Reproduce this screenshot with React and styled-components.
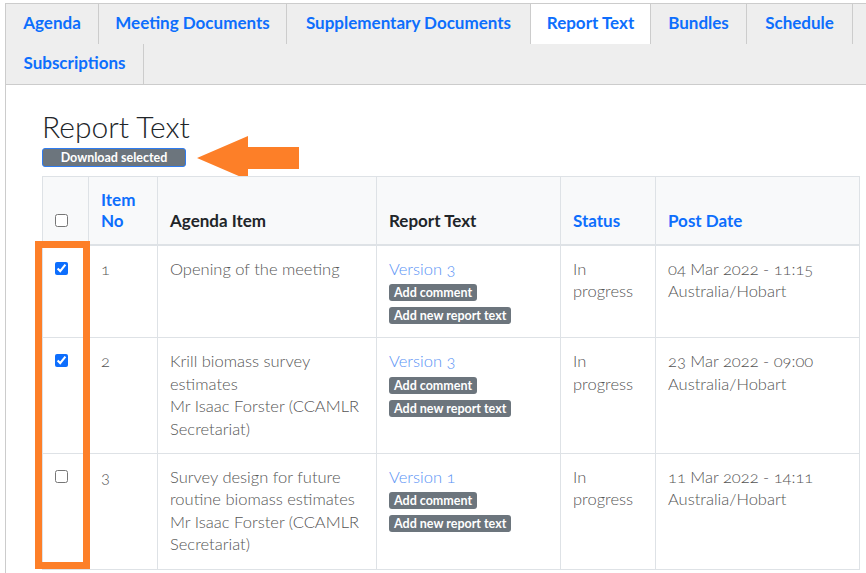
import * as React from 'react';
import styled, { createGlobalStyle } from 'styled-components';


/* data */
const TABS = [
    { label: 'Agenda', width: 93 },
    { label: 'Meeting Documents', width: 188 },
    { label: 'Supplementary Documents', width: 244 },
    { label: 'Report Text', width: 120, active: true },
    { label: 'Bundles', width: 96 },
    { label: 'Schedule', width: 106 },
    { label: 'Subscriptions', width: 138 },
];

const ROWS = [
    { no: '1', checked: true, item: ['Opening of the meeting'], version: 'Version 3', date: '04 Mar 2022 - 11:15' },
    { no: '2', checked: true, item: ['Krill biomass survey estimates', 'Mr Isaac Forster (CCAMLR Secretariat)'], version: 'Version 3', date: '23 Mar 2022 - 09:00' },
    { no: '3', checked: false, item: ['Survey design for future routine biomass estimates', 'Mr Isaac Forster (CCAMLR Secretariat)'], version: 'Version 1', date: '11 Mar 2022 - 14:11' },
];

const COLS = [46, 69, 219, 184, 95, 204];


/* styles */
const GlobalStyle = createGlobalStyle`
  body {
    margin: 0;
    background: #fff;
    font-family: Lato, "Open Sans", sans-serif;
  }
`;

const Page = styled('div')`
  padding: 3px 0 0 5px;
`;

const Panel = styled('div')`
  border-top: 1px solid #ccc;
  border-left: 1px solid #ccc;
  min-height: 569px;
`;

const TabBar = styled('nav')`
  display: flex;
  flex-wrap: wrap;
  background: #eee;
  border-bottom: 1px solid #ccc;
`;

const Tab = styled(({ active, w, ...props }) => <a {...props} />)`
  box-sizing: border-box;
  width: ${({ w }) => w}px;
  height: 40px;
  padding-bottom: 4px;
  display: flex;
  align-items: center;
  justify-content: center;
  border-right: 1px solid #ccc;
  background: ${({ active }) => (active ? '#fff' : 'transparent')};
  color: #0d6efd;
  font-size: 17px;
  font-weight: 700;
  text-decoration: none;
  cursor: pointer;
`;

const Content = styled('div')`
  padding: 0 7px 0 36px;
`;

const Title = styled('h1')`
  margin: 23px 0 4px;
  font-size: 30px;
  font-weight: 300;
  line-height: 1.2;
  color: #212529;
`;

const ButtonRow = styled('div')`
  position: relative;
  margin-bottom: 9px;
`;

const DownloadButton = styled('button')`
  display: block;
  box-sizing: border-box;
  width: 144px;
  height: 19px;
  padding: 0;
  border: 1px solid #2f7cf0;
  border-radius: 3px;
  background: #6c757d;
  color: #fff;
  font-family: Lato, sans-serif;
  font-size: 12.5px;
  font-weight: 700;
  line-height: 17px;
`;

const Arrow = styled('svg')`
  position: absolute;
  left: 154px;
  top: -13px;
`;

const TableWrap = styled('div')`
  position: relative;
`;

const Table = styled('table')`
  width: 817px;
  table-layout: fixed;
  border-collapse: collapse;
`;

const HeadRow = styled('tr')`
  background: #f8f9fa;
  border-bottom: 2px solid #dee2e6;
`;

const Th = styled(({ sortable, ...props }) => <th {...props} />)`
  padding: 12px 12px 13px;
  border: 1px solid #dee2e6;
  border-bottom: 2px solid #dee2e6;
  vertical-align: bottom;
  text-align: left;
  font-size: 17px;
  font-weight: 700;
  line-height: 21px;
  color: ${({ sortable }) => (sortable ? '#0d6efd' : '#212529')};
`;

const Td = styled('td')`
  padding: 12px 12px 13px;
  border: 1px solid #dee2e6;
  vertical-align: top;
  font-size: 16.5px;
  font-weight: 300;
  line-height: 22.4px;
  color: #555;
  font-variant-numeric: oldstyle-nums;
`;

const Check = styled(({ head, ...props }) => <input {...props} />)`
  width: 13px;
  height: 13px;
  margin: ${({ head }) => (head ? '0 0 4px' : '4px 0 0')};
  accent-color: #0d6efd;
`;

const VersionLink = styled('a')`
  display: block;
  color: #5a93f5;
  font-weight: 300;
  text-decoration: none;
`;

const Badges = styled('div')`
  display: flex;
  flex-direction: column;
  align-items: flex-start;
  gap: 6px;
  margin-top: 4px;
`;

const Badge = styled('span')`
  padding: 0 5px;
  border-radius: 3px;
  background: #6c757d;
  color: #fff;
  font-size: 12.5px;
  font-weight: 700;
  line-height: 17px;
  font-variant-numeric: normal;
`;

const Highlight = styled('div')`
  position: absolute;
  left: -7px;
  top: 65px;
  width: 55px;
  height: 328px;
  box-sizing: border-box;
  border: 7px solid #fd7f28;
  pointer-events: none;
`;


const App = () => {
    return (
        <Page>
            <GlobalStyle/>
            <Panel>
                <TabBar>
                    {TABS.map((t) => (
                        <Tab key={t.label} w={t.width} active={t.active}>{t.label}</Tab>
                    ))}
                </TabBar>

                <Content>
                    <Title>Report Text</Title>

                    <ButtonRow>
                        <DownloadButton>Download selected</DownloadButton>
                        <Arrow width="104" height="46" viewBox="0 0 104 46">
                            <path d="M1 23 L52 1 L52 12 L103 12 L103 34 L52 34 L52 45 Z" fill="#fd7f28"/>
                        </Arrow>
                    </ButtonRow>

                    <TableWrap>
                        <Table>
                            <colgroup>
                                {COLS.map((w, i) => <col key={i} style={{ width: w }}/>)}
                            </colgroup>
                            <thead>
                                <HeadRow>
                                    <Th><Check type="checkbox" head/></Th>
                                    <Th sortable>Item No</Th>
                                    <Th>Agenda Item</Th>
                                    <Th>Report Text</Th>
                                    <Th sortable>Status</Th>
                                    <Th sortable>Post Date</Th>
                                </HeadRow>
                            </thead>
                            <tbody>
                                {ROWS.map((r) => (
                                    <tr key={r.no}>
                                        <Td><Check type="checkbox" defaultChecked={r.checked}/></Td>
                                        <Td>{r.no}</Td>
                                        <Td>{r.item.map((line) => <div key={line}>{line}</div>)}</Td>
                                        <Td>
                                            <VersionLink>{r.version}</VersionLink>
                                            <Badges>
                                                <Badge>Add comment</Badge>
                                                <Badge>Add new report text</Badge>
                                            </Badges>
                                        </Td>
                                        <Td>In progress</Td>
                                        <Td>{r.date}<br/>Australia/Hobart</Td>
                                    </tr>
                                ))}
                            </tbody>
                        </Table>
                        <Highlight/>
                    </TableWrap>
                </Content>
            </Panel>
        </Page>
    )
};

export default App;
